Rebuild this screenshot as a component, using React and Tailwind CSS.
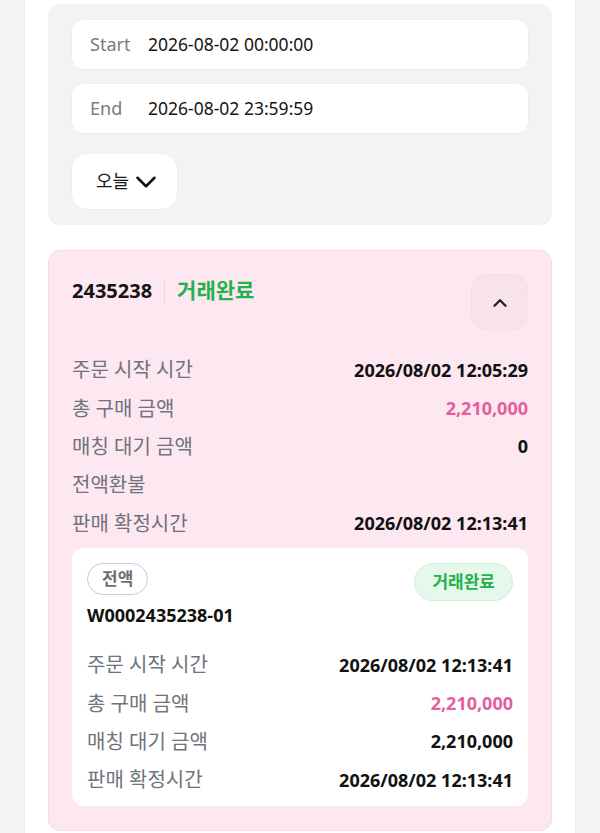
import { ChevronDown, ChevronUp } from "lucide-react";

const font = { fontFamily: '"Noto Sans", "Noto Sans CJK KR", sans-serif' };

const orderRows = [
  { label: "주문 시작 시간", value: "2026/08/02 12:05:29" },
  { label: "총 구매 금액", value: "2,210,000", pink: true },
  { label: "매칭 대기 금액", value: "0" },
  { label: "전액환불", value: "" },
  { label: "판매 확정시간", value: "2026/08/02 12:13:41" },
];

const subRows = [
  { label: "주문 시작 시간", value: "2026/08/02 12:13:41" },
  { label: "총 구매 금액", value: "2,210,000", pink: true },
  { label: "매칭 대기 금액", value: "2,210,000" },
  { label: "판매 확정시간", value: "2026/08/02 12:13:41" },
];

const InfoRow = ({ label, value, pink }) => (
  <div className="flex items-center justify-between h-[38.4px]">
    <span className="text-[20px] text-[#6f737b]">{label}</span>
    <span
      className={`text-[18px] font-bold ${
        pink ? "text-[#e2609c]" : "text-[#111111]"
      }`}
    >
      {value}
    </span>
  </div>
);

const DateInput = ({ label, value }) => (
  <div className="flex items-center h-[51px] bg-white border border-[#eceef1] rounded-xl pl-[18px]">
    <span className="w-[58px] text-[18px] text-[#767b84]">{label}</span>
    <span className="text-[17.5px] text-[#141414]">{value}</span>
  </div>
);

export default function App() {
  return (
    <div className="min-h-[833px] bg-[#f3f3f5] px-[24px]" style={font}>
      <div className="bg-white min-h-[833px] px-[23px] pt-[4px] border-x border-[#ececef]">
        {/* date filter */}
        <div className="bg-[#f2f3f5] rounded-xl px-[23px] pt-[15px] pb-[15px]">
          <DateInput label="Start" value="2026-08-02 00:00:00" />
          <div className="mt-[13px]">
            <DateInput label="End" value="2026-08-02 23:59:59" />
          </div>
          <button className="mt-[19px] flex items-center h-[57px] w-[107px] pl-[24px] bg-white border border-[#eceef1] rounded-2xl">
            <span className="text-[18px] text-[#1a1a1a]">오늘</span>
            <ChevronDown className="w-[34px] h-[34px] text-[#111]" strokeWidth={1.8} />
          </button>
        </div>

        {/* order card */}
        <div className="mt-[25px] bg-[#fde7f1] border border-[#f8d9e6] rounded-xl px-[23px] pt-[23px] pb-[24px]">
          <div className="flex items-start justify-between">
            <div className="flex items-center h-[34px]">
              <span className="text-[20px] font-bold text-[#141414]">2435238</span>
              <span className="mx-[12px] w-px h-[26px] bg-[#f3d3df]" />
              <span className="text-[21px] font-bold text-[#22b14c]">거래완료</span>
            </div>
            <button className="w-[57px] h-[57px] rounded-2xl bg-[#f8e2eb] border border-[#f6dde7] flex items-center justify-center">
              <ChevronUp className="w-[22px] h-[22px] text-[#222]" strokeWidth={2.6} />
            </button>
          </div>

          <div className="mt-[20px]">
            {orderRows.map((r) => (
              <InfoRow key={r.label} {...r} />
            ))}
          </div>

          {/* sub order */}
          <div className="mt-[5px] bg-white rounded-xl px-[15px] pt-[15px] pb-[6px]">
            <div className="flex items-start justify-between">
              <div>
                <span className="inline-flex items-center h-[32px] px-[14px] rounded-full border border-[#c9ccd4] text-[17px] font-bold text-[#6b7079]">
                  전액
                </span>
                <div className="mt-[7px] text-[18px] leading-[26px] font-bold text-[#111]">
                  W0002435238-01
                </div>
              </div>
              <span className="inline-flex items-center h-[38px] px-[17px] rounded-full bg-[#e4f9eb] border border-[#cdf1d8] text-[17px] font-bold text-[#22b14c]">
                거래완료
              </span>
            </div>
            <div className="mt-[18px]">
              {subRows.map((r) => (
                <InfoRow key={r.label} {...r} />
              ))}
            </div>
          </div>
        </div>
      </div>
    </div>
  );
}
